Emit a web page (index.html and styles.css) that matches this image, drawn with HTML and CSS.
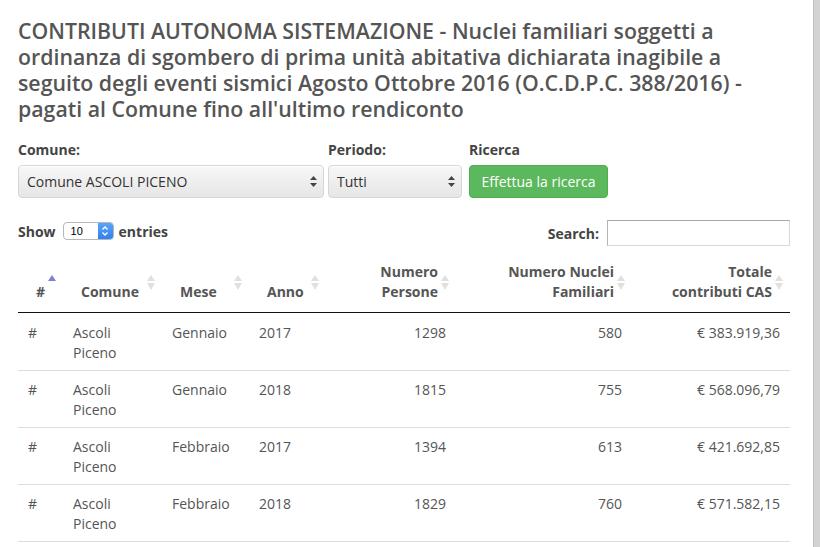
FILE: index.html
```html
<!DOCTYPE html>
<html lang="it">
<head>
<meta charset="utf-8">
<title>Contributi Autonoma Sistemazione</title>
<link rel="stylesheet" href="styles.css">
</head>
<body>
<div class="page">
  <main class="main">
    <h1 class="title">CONTRIBUTI AUTONOMA SISTEMAZIONE - Nuclei familiari soggetti a ordinanza di sgombero di prima unità abitativa dichiarata inagibile a seguito degli eventi sismici Agosto Ottobre 2016 (O.C.D.P.C. 388/2016) - pagati al Comune fino all'ultimo rendiconto</h1>

    <div class="filters">
      <div class="field">
        <span class="field-label">Comune:</span>
        <div class="select select-comune">
          <span>Comune ASCOLI PICENO</span>
          <svg class="select-arrows" width="7" height="11" viewBox="0 0 7 11"><path d="M3.5 0 L7 4 L0 4 Z M0 7 L7 7 L3.5 11 Z" fill="#444"/></svg>
        </div>
      </div>
      <div class="field">
        <span class="field-label">Periodo:</span>
        <div class="select select-periodo">
          <span>Tutti</span>
          <svg class="select-arrows" width="7" height="11" viewBox="0 0 7 11"><path d="M3.5 0 L7 4 L0 4 Z M0 7 L7 7 L3.5 11 Z" fill="#444"/></svg>
        </div>
      </div>
      <div class="field field-btn">
        <span class="field-label">Ricerca</span>
        <button class="btn-search" type="button">Effettua la ricerca</button>
      </div>
    </div>

    <div class="tools">
      <div class="length">
        <span>Show</span>
        <span class="mini-select"><span class="mini-value">10</span><span class="stepper"><svg width="8" height="12" viewBox="0 0 8 12"><path d="M1.5 4.5 L4 2 L6.5 4.5 M1.5 7.5 L4 10 L6.5 7.5" fill="none" stroke="#fff" stroke-width="1.3"/></svg></span></span>
        <span>entries</span>
      </div>
      <div class="search">
        <span>Search:</span>
        <span class="search-input"></span>
      </div>
    </div>

    <table class="data">
      <colgroup>
        <col class="c1"><col class="c2"><col class="c3"><col class="c4"><col class="c5"><col class="c6"><col class="c7">
      </colgroup>
      <thead>
        <tr>
          <th class="left">#<svg class="sort" width="8" height="15" viewBox="0 0 8 15"><path d="M4 0 L8 6 L0 6 Z" fill="#7f7fd5"/></svg></th>
          <th class="left">Comune<svg class="sort" width="8" height="15" viewBox="0 0 8 15"><path d="M4 0 L8 6 L0 6 Z M0 8 L8 8 L4 15 Z" fill="#e0e0e0"/></svg></th>
          <th class="left">Mese<svg class="sort" width="8" height="15" viewBox="0 0 8 15"><path d="M4 0 L8 6 L0 6 Z M0 8 L8 8 L4 15 Z" fill="#e0e0e0"/></svg></th>
          <th class="left">Anno<svg class="sort" width="8" height="15" viewBox="0 0 8 15"><path d="M4 0 L8 6 L0 6 Z M0 8 L8 8 L4 15 Z" fill="#e0e0e0"/></svg></th>
          <th class="right">Numero<br>Persone<svg class="sort" width="8" height="15" viewBox="0 0 8 15"><path d="M4 0 L8 6 L0 6 Z M0 8 L8 8 L4 15 Z" fill="#e0e0e0"/></svg></th>
          <th class="right">Numero Nuclei<br>Familiari<svg class="sort" width="8" height="15" viewBox="0 0 8 15"><path d="M4 0 L8 6 L0 6 Z M0 8 L8 8 L4 15 Z" fill="#e0e0e0"/></svg></th>
          <th class="right">Totale<br>contributi CAS<svg class="sort" width="8" height="15" viewBox="0 0 8 15"><path d="M4 0 L8 6 L0 6 Z M0 8 L8 8 L4 15 Z" fill="#e0e0e0"/></svg></th>
        </tr>
      </thead>
      <tbody>
        <tr>
          <td>#</td><td>Ascoli<br>Piceno</td><td>Gennaio</td><td>2017</td><td class="num">1298</td><td class="num">580</td><td class="num">€ 383.919,36</td>
        </tr>
        <tr>
          <td>#</td><td>Ascoli<br>Piceno</td><td>Gennaio</td><td>2018</td><td class="num">1815</td><td class="num">755</td><td class="num">€ 568.096,79</td>
        </tr>
        <tr>
          <td>#</td><td>Ascoli<br>Piceno</td><td>Febbraio</td><td>2017</td><td class="num">1394</td><td class="num">613</td><td class="num">€ 421.692,85</td>
        </tr>
        <tr>
          <td>#</td><td>Ascoli<br>Piceno</td><td>Febbraio</td><td>2018</td><td class="num">1829</td><td class="num">760</td><td class="num">€ 571.582,15</td>
        </tr>
      </tbody>
    </table>
  </main>
  <div class="edge"></div>
</div>
</body>
</html>
```

FILE: styles.css
```css
html, body {
  margin: 0;
  padding: 0;
  background: #fff;
}

body {
  font-family: "Open Sans", "Liberation Sans", sans-serif;
  font-size: 14px;
  color: #555;
  overflow: hidden;
}

.page {
  display: flex;
  height: 547px;
}

.main {
  flex: 1;
  padding: 0 23px 0 18px;
  min-width: 0;
}

.edge {
  width: 6px;
  background: #d3d3d3;
  border-left: 1px solid #c2c2c2;
}

.title {
  margin: 18px 0 0;
  font-size: 21.3px;
  line-height: 26px;
  font-weight: 600;
  color: #555;
}

.filters {
  display: flex;
  margin-top: 19px;
}

.field {
  display: flex;
  flex-direction: column;
  margin-right: 4px;
}

.field-btn {
  margin-left: 3px;
}

.field-label {
  font-weight: 700;
  color: #444;
  line-height: 18px;
  height: 18px;
  margin-bottom: 6px;
}

.select {
  box-sizing: border-box;
  height: 33px;
  display: flex;
  align-items: center;
  justify-content: space-between;
  padding: 0 6px 0 8px;
  border: 1px solid #d6d6d6;
  border-radius: 4px;
  background: linear-gradient(#f7f7f7, #e6e6e6);
  box-shadow: inset 0 1px 0 #fff;
  color: #333;
  font-size: 14px;
}

.select-comune {
  width: 306px;
}

.select-periodo {
  width: 134px;
}

.select-arrows {
  display: block;
}

.btn-search {
  box-sizing: border-box;
  height: 33px;
  width: 139px;
  padding: 0;
  border: 1px solid #4cae4c;
  border-radius: 4px;
  background: #5cb85c;
  color: #fff;
  font-family: "Open Sans", "Liberation Sans", sans-serif;
  font-size: 14px;
}

.tools {
  display: flex;
  justify-content: space-between;
  align-items: center;
  margin-top: 22px;
  height: 26px;
}

.length {
  display: flex;
  align-items: center;
  font-weight: 700;
  color: #444;
  margin-top: -4px;
}

.mini-select {
  display: inline-flex;
  align-items: stretch;
  box-sizing: border-box;
  width: 51px;
  height: 18px;
  margin: 0 5px 0 7px;
  border: 1px solid #b8b8b8;
  border-radius: 4px;
  background: #fff;
  overflow: hidden;
}

.mini-value {
  flex: 1;
  font-family: "Liberation Sans", sans-serif;
  font-size: 11px;
  font-weight: 400;
  color: #000;
  line-height: 16px;
  padding-left: 7px;
}

.stepper {
  width: 15px;
  background: linear-gradient(#5aa5f8, #2f80ef);
  display: flex;
  align-items: center;
  justify-content: center;
}

.search {
  display: flex;
  align-items: center;
  font-weight: 700;
  color: #444;
}

.search-input {
  box-sizing: border-box;
  width: 183px;
  height: 26px;
  margin-left: 8px;
  border: 1px solid #d9d9d9;
  border-top-color: #a8a8a8;
  border-left-color: #b5b5b5;
  background: #fff;
}

.data {
  margin-top: 6px;
  width: 772px;
  table-layout: fixed;
  border-collapse: collapse;
}

.c1 { width: 45px; }
.c2 { width: 99px; }
.c3 { width: 87px; }
.c4 { width: 77px; }
.c5 { width: 130px; }
.c6 { width: 176px; }
.c7 { width: 158px; }

.data th {
  position: relative;
  padding: 10px 18px;
  line-height: 20px;
  font-weight: 700;
  color: #555;
  vertical-align: bottom;
  border-bottom: 1px solid #111;
  white-space: nowrap;
}

.data th.left { text-align: left; }
.data th.right { text-align: right; }

.sort {
  position: absolute;
  right: 7px;
  top: 50%;
  margin-top: -7px;
}

.data td {
  padding: 9px 10px 7px;
  line-height: 20px;
  vertical-align: top;
  color: #555;
  border-bottom: 1px solid #ddd;
}

.data tbody tr:first-child td {
  padding-top: 10px;
}

.data td.num {
  text-align: right;
}
```
